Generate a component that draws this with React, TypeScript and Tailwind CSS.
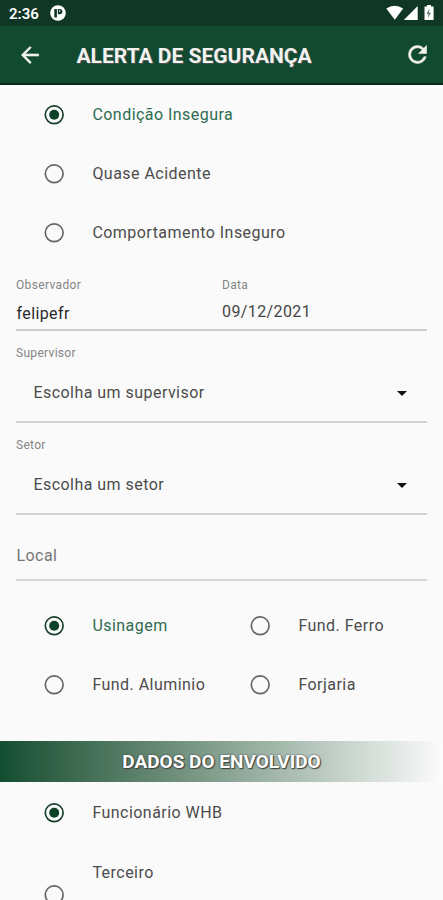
import React from "react";

function Radio({ checked = false }: { checked?: boolean }) {
  return (
    <svg viewBox="0 0 20 20" className="h-5 w-5 shrink-0" fill="none">
      <circle cx="10.2" cy="9.8" r="8.9" stroke={checked ? "#173f2c" : "#666666"} strokeWidth="1.7" />
      {checked && <circle cx="10.2" cy="9.8" r="5" fill="#0d4228" />}
    </svg>
  );
}

type OptionProps = { label: string; checked?: boolean; green?: boolean };

function Option({ label, checked, green }: OptionProps) {
  return (
    <div className="flex h-[59px] w-[206px] items-center gap-7 pl-11">
      <Radio checked={checked} />
      <Label text={label} className={green ? "text-[#2f6b50]" : "text-[#4c4c4c]"} />
    </div>
  );
}

function Label({ text, className = "" }: { text: string; className?: string }) {
  return (
    <span className={`whitespace-nowrap pl-[0.4px] text-base leading-5 tracking-[0.46px] ${className}`}>{text}</span>
  );
}

function Select({ label, text }: { label: string; text: string }) {
  return (
    <div className="mx-4 flex h-[92px] flex-col border-b-2 border-[#d2d2d2]">
      <span className="mt-[13.5px] text-xs leading-4 tracking-[0.3px] text-[#858585]">{label}</span>
      <div className="mt-[22.5px] flex h-5 items-center justify-between pl-[17px] pr-5">
        <Label text={text} className="text-[#4c4c4c]" />
        <svg viewBox="0 0 10 5" className="h-[5px] w-2.5" fill="#111111">
          <path d="M0 0h10L5 5z" />
        </svg>
      </div>
    </div>
  );
}

export default function App() {
  return (
    <div className="h-[900px] w-full overflow-hidden bg-[#fafafa] font-['Roboto',sans-serif]">
      <div className="flex h-[26px] items-center bg-[#103726] pl-[9px] pr-2 text-white">
        <span className="w-[41px] pt-px text-[15px] leading-5 font-semibold">2:36</span>
        <svg viewBox="0 0 16 16" className="h-4 w-4">
          <circle cx="8" cy="8" r="7.8" fill="#fff" />
          <path d="M4.3 4h2.6v8.5H4.3zM7.8 4h2a2.6 2.6 0 0 1 0 5.2h-2z" fill="#103726" />
          <path d="M9 5.2h1.2v1.6H9z" fill="#fff" />
        </svg>
        <svg viewBox="0 0 50 18" className="ml-auto h-[18px] w-[50px]" fill="#fff">
          <path d="M1.3 4.5Q9.5-1 18.2 4.5L9.8 15.8Z" />
          <path d="M32.7 2v14H18.8z" />
          <path d="M42 1h4v1.5h2.6V16h-9.1V2.5H42z" />
          <path d="M44.5 4.5l-3 5.5h2l-.7 4 3.2-5.2h-2z" fill="#637b6f" />
        </svg>
      </div>
      <header className="flex h-[59px] items-center border-b-2 border-[#09291a] bg-[#124a30] pl-[18px] pr-3 text-[#f2f2ee]">
        <svg viewBox="0 0 24 24" className="h-6 w-6" fill="currentColor" stroke="currentColor" strokeWidth=".5">
          <path d="M20.7 10.9H7.2l6.1-6.1L12 3.4 3.3 12l8.7 8.7 1.4-1.4-6.2-6.2h13.5z" />
        </svg>
        <h1 className="ml-[34.5px] mt-0.5 whitespace-nowrap text-[21px] leading-6 font-bold [text-shadow:1px_1px_1px_#555]">
          ALERTA DE SEGURANÇA
        </h1>
        <svg
          viewBox="0 0 24 24"
          className="ml-auto h-[27px] w-[27px]"
          fill="currentColor"
          stroke="currentColor"
          strokeWidth=".5"
        >
          <path d="M17.65 6.35A7.96 7.96 0 0 0 12 4a8 8 0 1 0 7.73 10h-2.08A6 6 0 1 1 12 6c1.66 0 3.14.69 4.22 1.78L13 11h7V4z" />
        </svg>
      </header>

      <section className="flex h-[177px] flex-col">
        <Option label="Condição Insegura" checked green />
        <Option label="Quase Acidente" />
        <Option label="Comportamento Inseguro" />
      </section>

      <div className="mx-4 flex h-[69px] border-b-2 border-[#cccccc]">
        <div className="flex w-[206px] flex-col pt-[15px]">
          <span className="text-xs leading-4 tracking-[0.35px] text-[#858585]">Observador</span>
          <span className="mt-[11px] pl-[0.5px] text-base leading-5 tracking-[0.4px] text-[#292929]">felipefr</span>
        </div>
        <div className="flex flex-col pt-[15px]">
          <span className="text-xs leading-4 tracking-[0.3px] text-[#858585]">Data</span>
          <span className="mt-[9px] text-base leading-5 tracking-[0.4px] text-[#454545]">09/12/2021</span>
        </div>
      </div>

      <Select label="Supervisor" text="Escolha um supervisor" />
      <Select label="Setor" text="Escolha um setor" />

      <div className="mx-4 flex h-[66px] border-b-2 border-[#d6d6d6] pt-[31px]">
        <Label text="Local" className="text-[#777777]" />
      </div>

      <section className="mt-[15px] flex flex-col">
        <div className="flex">
          <Option label="Usinagem" checked green />
          <Option label="Fund. Ferro" />
        </div>
        <div className="flex">
          <Option label="Fund. Aluminio" />
          <Option label="Forjaria" />
        </div>
      </section>

      <div className="mt-[27px] flex h-[41px] items-center justify-center bg-linear-to-r from-[#124e32] to-[#fcfcfc]">
        <h2 className="pt-px text-[19px] font-bold text-white [text-shadow:0_0_2px_#333,1px_1px_1px_#444]">
          DADOS DO ENVOLVIDO
        </h2>
      </div>

      <div className="pt-px">
        <Option label="Funcionário WHB" checked />
      </div>
      <div className="flex gap-7 pl-11">
        <div className="pt-[43px]">
          <Radio />
        </div>
        <div className="pt-[19px]">
          <Label text="Terceiro" className="text-[#4c4c4c]" />
        </div>
      </div>
    </div>
  );
}
